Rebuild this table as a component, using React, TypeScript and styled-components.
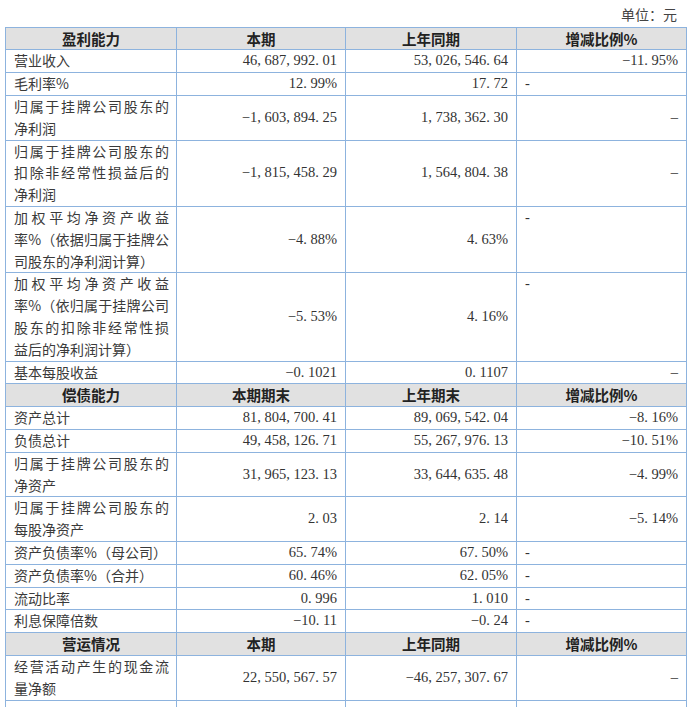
import React from "react";
import styled, { createGlobalStyle } from "styled-components";

const GlobalStyle = createGlobalStyle`
  html, body { margin: 0; padding: 0; background: #ffffff; }
  body { font-family: "Liberation Serif", "Noto Sans CJK SC", serif; color: #333; }
`;

const LINE = "#8db3de";

const Page = styled.div`
  width: 689px;
  box-sizing: border-box;
  padding: 4px 3px 0 5px;
`;

const Unit = styled.div`
  text-align: right;
  padding-right: 9px;
  height: 22.6px;
  line-height: 20px;
  font-family: "Noto Sans CJK SC", sans-serif;
  font-size: 14px;
  color: #444;
`;

const Table = styled.table`
  width: 681px;
  border-collapse: collapse;
  table-layout: fixed;
  border: 1px solid ${LINE};
`;

const Col = styled.col<{ $w: number }>`
  width: ${(p) => p.$w}px;
`;

const HeadCell = styled.th`
  border: 1px solid ${LINE};
  background: #e1e1e1;
  padding: 0 8px;
  height: 21.8px;
  line-height: 21.8px;
  font-family: "Noto Sans CJK SC", sans-serif;
  font-size: 14.5px;
  font-weight: 700;
  color: #222;
  text-align: center;
`;

const Cell = styled.td<{ $align: "left" | "right"; $valign: "middle" | "top" }>`
  border: 1px solid ${LINE};
  padding: 0 8px;
  height: 21.8px;
  line-height: 21.8px;
  font-size: 14.5px;
  color: #333;
  text-align: ${(p) => p.$align};
  vertical-align: ${(p) => p.$valign};
  white-space: nowrap;
`;

const LabelCell = styled.td`
  border: 1px solid ${LINE};
  padding: 0 7px 0 8px;
  line-height: 21.8px;
  font-family: "Noto Sans CJK SC", sans-serif;
  font-size: 14px;
  color: #3a3a3a;
  vertical-align: middle;
`;

const LabelLine = styled.span<{ $fill: boolean }>`
  display: block;
  white-space: nowrap;
  text-align: left;
  text-align-last: ${(p) => (p.$fill ? "justify" : "auto")};
`;

const Sep = styled.span`
  margin-right: 0.25em;
`;

const Dash = styled.span`
  font-family: "Liberation Serif", serif;
`;

type Change = { text: string; kind: "right" | "left" | "top" };
type Row = { label: string[]; cur: string; prev: string; change: Change };
type Section = { head: [string, string, string, string]; rows: Row[] };

const R = (t: string): Change => ({ text: t, kind: "right" });
const L: Change = { text: "-", kind: "left" };
const T: Change = { text: "-", kind: "top" };

const sections: Section[] = [
  {
    head: ["盈利能力", "本期", "上年同期", "增减比例%"],
    rows: [
      { label: ["营业收入"], cur: "46,687,992.01", prev: "53,026,546.64", change: R("−11.95%") },
      { label: ["毛利率%"], cur: "12.99%", prev: "17.72", change: L },
      { label: ["归属于挂牌公司股东的", "净利润"], cur: "−1,603,894.25", prev: "1,738,362.30", change: R("–") },
      {
        label: ["归属于挂牌公司股东的", "扣除非经常性损益后的", "净利润"],
        cur: "−1,815,458.29",
        prev: "1,564,804.38",
        change: R("–"),
      },
      {
        label: ["加权平均净资产收益", "率%（依据归属于挂牌公", "司股东的净利润计算）"],
        cur: "−4.88%",
        prev: "4.63%",
        change: T,
      },
      {
        label: ["加权平均净资产收益", "率%（依归属于挂牌公司", "股东的扣除非经常性损", "益后的净利润计算）"],
        cur: "−5.53%",
        prev: "4.16%",
        change: T,
      },
      { label: ["基本每股收益"], cur: "−0.1021", prev: "0.1107", change: R("–") },
    ],
  },
  {
    head: ["偿债能力", "本期期末", "上年期末", "增减比例%"],
    rows: [
      { label: ["资产总计"], cur: "81,804,700.41", prev: "89,069,542.04", change: R("−8.16%") },
      { label: ["负债总计"], cur: "49,458,126.71", prev: "55,267,976.13", change: R("−10.51%") },
      { label: ["归属于挂牌公司股东的", "净资产"], cur: "31,965,123.13", prev: "33,644,635.48", change: R("−4.99%") },
      { label: ["归属于挂牌公司股东的", "每股净资产"], cur: "2.03", prev: "2.14", change: R("−5.14%") },
      { label: ["资产负债率%（母公司）"], cur: "65.74%", prev: "67.50%", change: L },
      { label: ["资产负债率%（合并）"], cur: "60.46%", prev: "62.05%", change: L },
      { label: ["流动比率"], cur: "0.996", prev: "1.010", change: L },
      { label: ["利息保障倍数"], cur: "−10.11", prev: "−0.24", change: L },
    ],
  },
  {
    head: ["营运情况", "本期", "上年同期", "增减比例%"],
    rows: [
      {
        label: ["经营活动产生的现金流", "量净额"],
        cur: "22,550,567.57",
        prev: "−46,257,307.67",
        change: R("–"),
      },
    ],
  },
];

const Num: React.FC<{ value: string }> = ({ value }) => (
  <>
    {value.split(/([,.])/).map((part, i) =>
      part === "," || part === "." ? <Sep key={i}>{part}</Sep> : <React.Fragment key={i}>{part}</React.Fragment>
    )}
  </>
);

const Label: React.FC<{ lines: string[] }> = ({ lines }) => (
  <>
    {lines.map((line, i) => (
      <LabelLine key={i} $fill={i < lines.length - 1}>
        {line}
      </LabelLine>
    ))}
  </>
);

export default function App() {
  return (
    <>
      <GlobalStyle />
      <Page>
        <Unit>单位：元</Unit>
        <Table>
          <colgroup>
            <Col $w={171} />
            <Col $w={169} />
            <Col $w={171} />
            <Col $w={170} />
          </colgroup>
          <tbody>
            {sections.map((s, si) => (
              <React.Fragment key={si}>
                <tr>
                  {s.head.map((h, hi) => (
                    <HeadCell key={hi}>{h}</HeadCell>
                  ))}
                </tr>
                {s.rows.map((r, ri) => (
                  <tr key={ri}>
                    <LabelCell>
                      <Label lines={r.label} />
                    </LabelCell>
                    <Cell $align="right" $valign="middle">
                      <Num value={r.cur} />
                    </Cell>
                    <Cell $align="right" $valign="middle">
                      <Num value={r.prev} />
                    </Cell>
                    <Cell
                      $align={r.change.kind === "right" ? "right" : "left"}
                      $valign={r.change.kind === "top" ? "top" : "middle"}
                    >
                      {r.change.text.length > 1 ? <Num value={r.change.text} /> : <Dash>{r.change.text}</Dash>}
                    </Cell>
                  </tr>
                ))}
              </React.Fragment>
            ))}
            <tr>
              <LabelCell>&nbsp;</LabelCell>
              <Cell $align="right" $valign="middle" />
              <Cell $align="right" $valign="middle" />
              <Cell $align="left" $valign="middle" />
            </tr>
          </tbody>
        </Table>
      </Page>
    </>
  );
}
